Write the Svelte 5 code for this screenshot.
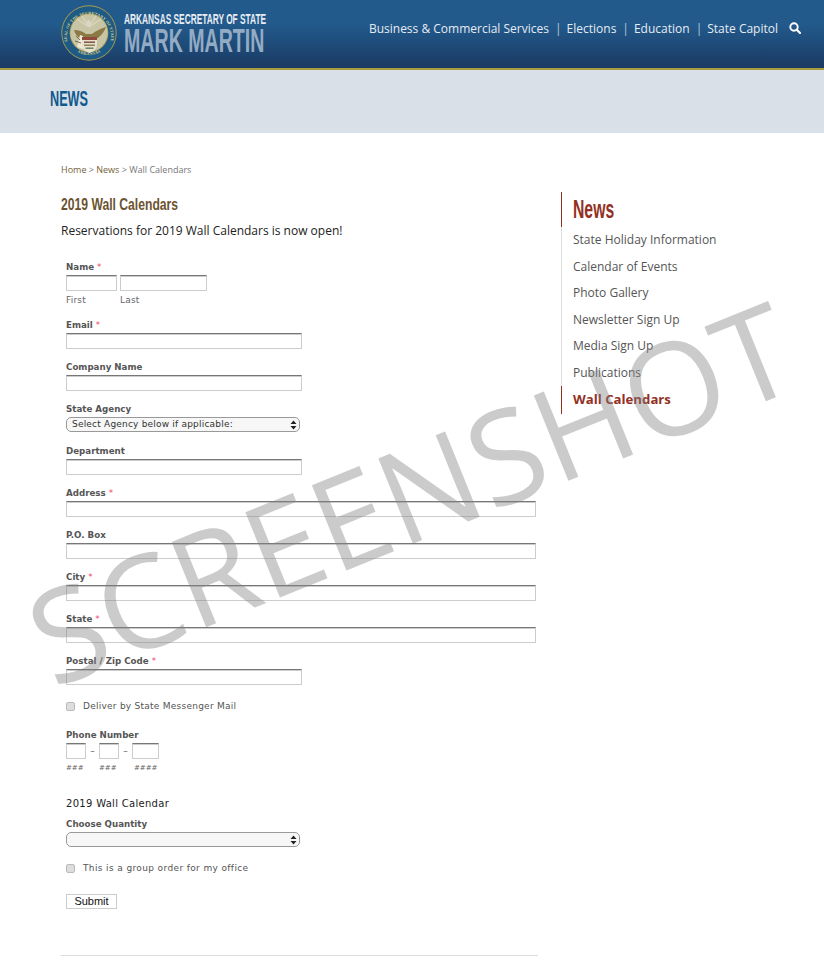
<script lang="ts">
  const navLinks = ['Business & Commercial Services', 'Elections', 'Education', 'State Capitol']

  const sideLinks = [
    'State Holiday Information',
    'Calendar of Events',
    'Photo Gallery',
    'Newsletter Sign Up',
    'Media Sign Up',
    'Publications'
  ]

  const addressFields = [
    { label: 'Department', required: false, size: 'short' },
    { label: 'Address', required: true, size: 'long' },
    { label: 'P.O. Box', required: false, size: 'long' },
    { label: 'City', required: true, size: 'long' },
    { label: 'State', required: true, size: 'long' },
    { label: 'Postal / Zip Code', required: true, size: 'short' }
  ]
</script>

<div class="page">
  <header class="topbar">
    <a class="brand" href="#top">
      <svg class="seal" viewBox="0 0 56 56" width="56" height="56" aria-hidden="true">
        <defs>
          <path id="sealTop" d="M7 38 A22 22 0 1 1 49 38" />
          <path id="sealBottom" d="M15 46 A22.5 22.5 0 0 0 41 46" />
        </defs>
        <circle cx="28" cy="28" r="27.7" fill="#a99c4e" />
        <circle cx="28" cy="28" r="26.8" fill="#1d5a85" />
        <circle cx="28" cy="28" r="19.4" fill="#a99c4e" />
        <circle cx="28" cy="28" r="18.6" fill="#c8c4a6" />
        <text class="sealtext"><textPath href="#sealTop" startOffset="50%" text-anchor="middle">SEAL OF THE SECRETARY OF STATE</textPath></text>
        <text class="sealtext"><textPath href="#sealBottom" startOffset="50%" text-anchor="middle">ARKANSAS</textPath></text>
        <path d="M28 22 L16 14 M28 22 L21 11 M28 22 L35 11 M28 22 L40 14" stroke="#dbd7bd" stroke-width="1.2" />
        <path d="M25 21 Q25 15 27.5 15 Q30 15 30 21 Z" fill="#d8d6c6" />
        <path d="M13 25 Q20 25 25 29 L31 29 Q36 25 45 22 Q43 28 37 33 L19 33 Q14 30 13 25 Z" fill="#8c7a45" />
        <path d="M16 42 L19 30 L22 31 L22 44 Z" fill="#ece9d8" />
        <path d="M19 35 L15 31 M20 38 L14 36" stroke="#5d4f2c" stroke-width="0.8" />
        <path d="M21 32 H36 V40 Q36 45 28.5 48 Q21 45 21 40 Z" fill="#e6e0cc" />
        <rect x="21" y="32" width="15" height="3" fill="#8f4a3a" />
        <rect x="23" y="36.5" width="11" height="1.4" fill="#7a4a3a" />
        <rect x="23" y="39.5" width="11" height="1.4" fill="#8a7a4a" />
        <rect x="24.5" y="42.5" width="8" height="1.4" fill="#5f7d5c" />
      </svg>
      <span class="wordmark">
        <span class="office">ARKANSAS SECRETARY OF STATE</span>
        <span class="person">MARK MARTIN</span>
      </span>
    </a>

    <nav class="mainnav">
      {#each navLinks as link, i}
        {#if i > 0}<span class="pipe">|</span>{/if}
        <a href="#top">{link}</a>
      {/each}
      <svg class="search" viewBox="0 0 12 12" width="12" height="12" aria-hidden="true">
        <circle cx="5" cy="5" r="3.7" fill="none" stroke="#fff" stroke-width="1.9" />
        <path d="M7.8 7.8 L11 11" stroke="#fff" stroke-width="2.2" stroke-linecap="round" />
      </svg>
    </nav>
  </header>

  <div class="band">
    <h1><span class="squeeze">NEWS</span></h1>
  </div>

  <div class="columns">
    <main class="content">
      <p class="crumbs"><a href="#top">Home</a> &gt; <a href="#top">News</a> &gt; <span>Wall Calendars</span></p>
      <h2><span class="squeeze">2019 Wall Calendars</span></h2>
      <p class="intro">Reservations for 2019 Wall Calendars is now open!</p>

      <form>
        <div class="field">
          <span class="lbl">Name <em>*</em></span>
          <div class="namerow">
            <div class="sub first"><input type="text" /><small>First</small></div>
            <div class="sub last"><input type="text" /><small>Last</small></div>
          </div>
        </div>

        <div class="field">
          <span class="lbl">Email <em>*</em></span>
          <input class="short" type="text" />
        </div>

        <div class="field">
          <span class="lbl">Company Name</span>
          <input class="short" type="text" />
        </div>

        <div class="field">
          <span class="lbl">State Agency</span>
          <div class="selectwrap">
            <select><option>Select Agency below if applicable:</option></select>
            <svg viewBox="0 0 7 10" width="7" height="10" aria-hidden="true"><path d="M3.5 0.5 L6.5 4 H0.5 Z M3.5 9.5 L0.5 6 H6.5 Z" fill="#222" /></svg>
          </div>
        </div>

        {#each addressFields as item}
          <div class="field">
            <span class="lbl">{item.label} {#if item.required}<em>*</em>{/if}</span>
            <input class={item.size} type="text" />
          </div>
        {/each}

        <label class="check messenger"><input type="checkbox" /> Deliver by State Messenger Mail</label>

        <div class="field phone">
          <span class="lbl">Phone Number</span>
          <div class="phonerow">
            <input class="p3" type="text" /><i>–</i>
            <input class="p3" type="text" /><i>–</i>
            <input class="p4" type="text" />
          </div>
          <div class="phonehints">
            <small class="p3">###</small>
            <small class="p3">###</small>
            <small class="p4">####</small>
          </div>
        </div>

        <h3>2019 Wall Calendar</h3>

        <div class="field qty">
          <span class="lbl">Choose Quantity</span>
          <div class="selectwrap">
            <select><option></option></select>
            <svg viewBox="0 0 7 10" width="7" height="10" aria-hidden="true"><path d="M3.5 0.5 L6.5 4 H0.5 Z M3.5 9.5 L0.5 6 H6.5 Z" fill="#222" /></svg>
          </div>
        </div>

        <label class="check group"><input type="checkbox" /> This is a group order for my office</label>

        <button type="button">Submit</button>
      </form>

      <hr />
    </main>

    <aside class="side">
      <h4><span class="squeeze">News</span></h4>
      <ul>
        {#each sideLinks as link}
          <li><a href="#top">{link}</a></li>
        {/each}
        <li class="active"><a href="#top">Wall Calendars</a></li>
      </ul>
    </aside>
  </div>

  <div class="watermark">SCREENSHOT</div>
</div>

<style>
  :global(body) {
    background: #fff;
  }

  .page {
    position: relative;
    height: 966px;
    overflow: hidden;
    font-family: 'Open Sans', sans-serif;
  }

  .topbar {
    display: flex;
    align-items: flex-start;
    justify-content: space-between;
    box-sizing: content-box;
    height: 63px;
    padding: 5px 23px 0 61px;
    background: linear-gradient(#225a8c 0, #225a8c 35%, #1a3a63 100%);
    border-bottom: 2px solid #a99c3e;
  }

  .brand {
    display: flex;
    gap: 7px;
    text-decoration: none;
  }

  .sealtext {
    font: 700 4.1px 'Liberation Serif', serif;
    fill: #d9cf8e;
    letter-spacing: 0.2px;
  }

  .wordmark {
    display: flex;
    flex-direction: column;
    width: 141px;
    padding-top: 7px;
    font-family: 'Liberation Sans', sans-serif;
    font-weight: 700;
  }

  .office,
  .person,
  .squeeze {
    display: block;
    width: max-content;
    white-space: nowrap;
    transform-origin: left center;
  }

  .office {
    font-size: 14px;
    line-height: 15px;
    color: #e8edf3;
    transform: scaleX(0.595);
  }

  .person {
    font-size: 33.5px;
    line-height: 28px;
    color: #94abc4;
    transform: scaleX(0.585);
  }

  .mainnav {
    display: flex;
    align-items: center;
    height: 46px;
    margin-top: -5px;
    padding-top: 10px;
    box-sizing: border-box;
    font-size: 12px;
    color: #dde5ee;
  }

  .mainnav a {
    color: #e6ecf3;
    text-decoration: none;
  }

  .pipe {
    margin: 0 5px 0 6px;
    color: #b8c8da;
  }

  .search {
    margin-left: 11px;
  }

  .band {
    height: 63px;
    padding-left: 50px;
    background: #d9e0e8;
  }

  h1 {
    margin: 0;
    padding-top: 16px;
    font: 700 22px/26px 'Liberation Sans', sans-serif;
    color: #11598c;
  }

  h1 .squeeze {
    transform: scaleX(0.575);
  }

  .columns {
    display: flex;
    padding-left: 61px;
  }

  .content {
    width: 477px;
  }

  .crumbs {
    margin: 30px 0 0;
    font-size: 9px;
    line-height: 14px;
    color: #777;
  }

  .crumbs a {
    color: #74623a;
    text-decoration: none;
  }

  h2 {
    margin: 17px 0 0;
    font: 700 17px/22px 'Liberation Sans', sans-serif;
    color: #6b5330;
  }

  h2 .squeeze {
    transform: scaleX(0.715);
  }

  .intro {
    margin: 6px 0 0;
    font-size: 12px;
    line-height: 18px;
    color: #222;
  }

  form {
    padding: 20px 0 0 5px;
    font-family: 'DejaVu Sans', sans-serif;
  }

  .field {
    display: flex;
    flex-direction: column;
    height: 42px;
  }

  .field:first-child {
    height: 58px;
  }

  .lbl {
    height: 15px;
    font-size: 8.7px;
    line-height: 14px;
    font-weight: 700;
    color: #555;
  }

  .lbl em {
    font-style: normal;
    font-weight: 400;
    color: #f0455f;
  }

  input[type='text'] {
    display: block;
    box-sizing: border-box;
    height: 16px;
    margin: 0;
    padding: 0;
    background: #fff;
    border: 1px solid #ccc;
    border-top: 1px solid #777;
    border-radius: 0;
    box-shadow: inset 0 1px 0 #ccc;
  }

  .short {
    width: 236px;
  }

  .long {
    width: 470px;
  }

  .namerow {
    display: flex;
    gap: 3px;
  }

  .first input {
    width: 51px;
  }

  .last input {
    width: 87px;
  }

  small {
    display: block;
    font-size: 9px;
    line-height: 18px;
    letter-spacing: 0.2px;
    color: #666;
  }

  .selectwrap {
    position: relative;
    width: 234px;
    height: 15px;
  }

  .selectwrap svg {
    position: absolute;
    top: 3px;
    right: 3px;
  }

  select {
    display: block;
    width: 100%;
    height: 15px;
    padding: 0 5px;
    font: 9px/13px 'DejaVu Sans', sans-serif;
    letter-spacing: 0.2px;
    color: #333;
    appearance: none;
    background: #f7f7f7;
    border: 1px solid #999;
    border-radius: 5px;
  }

  .check {
    display: flex;
    align-items: center;
    gap: 8px;
    font-size: 9px;
    line-height: 14px;
    letter-spacing: 0.25px;
    color: #555;
  }

  .check input {
    width: 9px;
    height: 9px;
    margin: 0;
    appearance: none;
    background: #ddd;
    border: 1px solid #bbb;
    border-radius: 2px;
  }

  .messenger {
    margin-top: 3px;
  }

  .phone {
    height: auto;
    margin-top: 15px;
  }

  .phonerow {
    display: flex;
    align-items: center;
  }

  .phonerow i {
    width: 13px;
    font-style: normal;
    font-size: 9px;
    text-align: center;
    color: #555;
  }

  .p3 {
    width: 20px;
  }

  .p4 {
    width: 27px;
  }

  .phonehints {
    display: flex;
    gap: 13px;
  }

  .phonehints small {
    font-size: 7px;
    line-height: 18px;
    letter-spacing: 0;
    font-style: italic;
    white-space: nowrap;
  }

  .phonehints small:last-child {
    padding-left: 2px;
  }

  h3 {
    margin: 20px 0 0;
    font-size: 10px;
    font-weight: 400;
    line-height: 14px;
    letter-spacing: 0.3px;
    color: #222;
  }

  .qty {
    height: auto;
    margin-top: 6px;
  }

  .group {
    margin-top: 14px;
    letter-spacing: 0.37px;
  }

  button {
    display: block;
    width: 51px;
    height: 15px;
    margin-top: 19px;
    padding: 0;
    font: 11px/13px 'Liberation Sans', sans-serif;
    color: #111;
    background: #fff;
    border: 1px solid #ccc;
    border-radius: 0;
  }

  hr {
    margin: 46px 0 0;
    border: 0;
    border-top: 1px solid #ddd;
  }

  .side {
    width: 240px;
    height: 221px;
    margin: 59px 0 0 23px;
    border-left: 1px solid #ddd;
  }

  h4 {
    height: 35px;
    margin: 0 0 0 -1px;
    padding-left: 11px;
    font: 700 25px/35px 'Liberation Sans', sans-serif;
    color: #933024;
    border-left: 1px solid #933024;
  }

  h4 .squeeze {
    transform: scaleX(0.63);
  }

  ul {
    margin: 0;
    padding: 0;
    list-style: none;
  }

  li {
    height: 26.5px;
    padding-left: 11px;
    font-size: 12px;
    line-height: 26.5px;
  }

  li a {
    color: #555;
    text-decoration: none;
  }

  li.active {
    height: 28px;
    margin-left: -1px;
    padding-left: 11px;
    border-left: 1px solid #933024;
    font-size: 13.2px;
    font-weight: 700;
  }

  li.active a {
    color: #933024;
  }

  .watermark {
    position: absolute;
    top: 429px;
    left: -2px;
    width: 824px;
    font-size: 129px;
    font-weight: 500;
    line-height: 124px;
    text-align: center;
    white-space: nowrap;
    color: rgba(130, 130, 130, 0.42);
    transform: rotate(-22deg);
    pointer-events: none;
  }
</style>
